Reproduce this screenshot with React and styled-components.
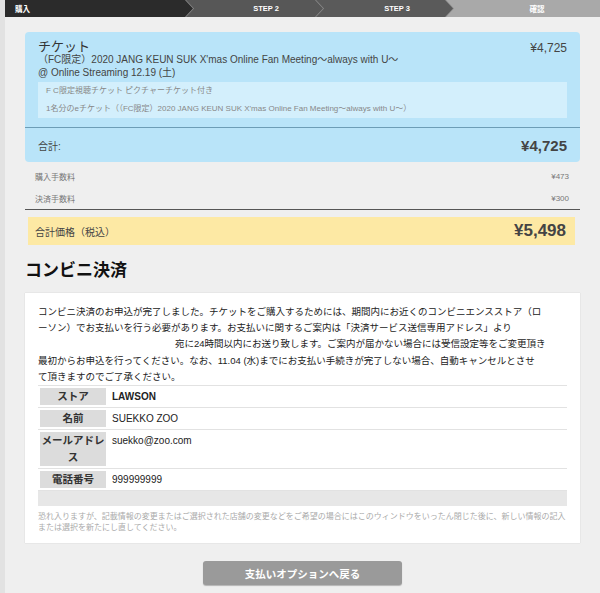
import React from 'react';
import styled, { createGlobalStyle } from 'styled-components';

const GlobalStyle = createGlobalStyle`
  body {
    margin: 0;
    background: #efefef;
    font-family: "Liberation Sans", "Noto Sans CJK JP", sans-serif;
    color: #333;
  }
`;

const Page = styled.div`
  min-height: 593px;
  border-left: 5px solid #e2e2e2;
`;

const StepBar = styled.div`
  display: flex;
  height: 17px;
  background: #8c8c8c;
  overflow: hidden;
`;

const Step = styled.div`
  flex: 0 0 ${props => props.$width}px;
  margin-left: ${props => (props.$first ? 0 : -7)}px;
  display: flex;
  align-items: center;
  justify-content: ${props => (props.$first ? 'flex-start' : 'center')};
  padding-left: ${props => props.$pad}px;
  box-sizing: border-box;
  background: ${props => props.$tone};
  color: #fff;
  font-size: 7.5px;
  font-weight: bold;
  clip-path: ${props =>
    props.$first
      ? 'polygon(0 0, calc(100% - 8px) 0, 100% 50%, calc(100% - 8px) 100%, 0 100%)'
      : props.$last
        ? 'polygon(0 0, 100% 0, 100% 100%, 0 100%, 8px 50%)'
        : 'polygon(0 0, calc(100% - 8px) 0, 100% 50%, calc(100% - 8px) 100%, 0 100%, 8px 50%)'};
`;

const Main = styled.div`
  padding: 15px 20px 0;
`;

const TicketCard = styled.div`
  background: #b9e4f9;
  border-radius: 4px;
  padding: 7px 13px 0;
`;

const TicketHead = styled.div`
  display: flex;
  justify-content: space-between;
  align-items: flex-start;
`;

const TicketTitle = styled.div`
  font-size: 13px;
  line-height: 15px;
  color: #333;
`;

const TicketSub = styled.div`
  font-size: 10px;
  line-height: 12.5px;
  color: #444;
`;

const Price = styled.div`
  font-size: ${props => (props.$big ? 15 : 12)}px;
  font-weight: ${props => (props.$big ? 'bold' : 'normal')};
  line-height: 15px;
  margin-top: ${props => (props.$big ? 0 : 2)}px;
  color: #444;
`;

const Included = styled.div`
  margin-top: 3px;
  background: #d3effc;
  padding: 0 8px;
`;

const IncludedLine = styled.div`
  font-size: 8px;
  line-height: 18px;
  color: #888;
`;

const TotalRow = styled.div`
  margin: 9px -13px 0;
  padding: 0 13px;
  height: 34px;
  border-top: 1px solid #6d9db6;
  display: flex;
  align-items: center;
  justify-content: space-between;
  font-size: 10px;
  color: #444;
`;

const FeeList = styled.div`
  padding: 3px 11px 0 10px;
  border-bottom: 1px solid #555;
`;

const FeeRow = styled.div`
  display: flex;
  justify-content: space-between;
  align-items: center;
  height: 22px;
  font-size: 8px;
  color: #777;
`;

const GrandTotal = styled.div`
  margin: 7px 5px 0 3px;
  height: 28px;
  padding: 0 9px 0 7px;
  background: #fde9a4;
  display: flex;
  align-items: center;
  justify-content: space-between;
  font-size: 10px;
  color: #444;
`;

const GrandAmount = styled.span`
  font-size: 17px;
  font-weight: bold;
`;

const SectionTitle = styled.h2`
  margin: 16px 0 12px;
  font-size: 17px;
  line-height: 20px;
  font-weight: bold;
  color: #111;
`;

const InfoCard = styled.div`
  background: #fff;
  padding: 11px 13px 10px;
  box-shadow: 0 0 1px rgba(0, 0, 0, 0.2);
`;

const NoticeLine = styled.div`
  font-size: 9.5px;
  line-height: 16.2px;
  color: #222;
  white-space: nowrap;
  padding-left: ${props => props.$indent || 0}px;
`;

const InfoRow = styled.div`
  display: flex;
  border-top: 1px solid #e2e2e2;
  padding: 2px 0;
`;

const InfoLabel = styled.div`
  flex: 0 0 66px;
  margin-left: 2px;
  background: #dcdcdc;
  text-align: center;
  font-size: 10.5px;
  font-weight: bold;
  line-height: 17px;
  color: #333;
`;

const InfoValue = styled.div`
  padding-left: 6px;
  font-size: 10px;
  line-height: 17px;
  color: #222;
  font-weight: ${props => (props.$strong ? 600 : 'normal')};
`;

const TableFoot = styled.div`
  height: 15px;
  border-top: 1px solid #e2e2e2;
  background: #e7e7e7;
`;

const Footnote = styled.p`
  margin: 6px 0 0;
  font-size: 8px;
  line-height: 10.5px;
  color: #aaa;
`;

const BackButton = styled.button`
  display: block;
  margin: 18px auto 0;
  width: 199px;
  height: 24px;
  border: none;
  border-radius: 3px;
  background: #9a9a9a;
  box-shadow: 0 1px 1px rgba(0, 0, 0, 0.25);
  color: #fff;
  font-family: inherit;
  font-size: 10.5px;
  font-weight: bold;
`;

const steps = [
  { label: '購入', width: 188, tone: '#2b2b2b', pad: 10 },
  { label: 'STEP 2', width: 137, tone: '#575757', pad: 23 },
  { label: 'STEP 3', width: 137, tone: '#5a5a5a', pad: 25 },
  { label: '確認', width: 154, tone: '#a9a9a9', pad: 28 }
];

const customer = [
  { label: 'ストア', value: 'LAWSON', strong: true },
  { label: '名前', value: 'SUEKKO ZOO' },
  { label: 'メールアドレス', value: 'suekko@zoo.com' },
  { label: '電話番号', value: '999999999' }
];

export default function App() {
  return (
    <Page>
      <GlobalStyle />
      <StepBar>
        {steps.map((s, i) => (
          <Step
            key={s.label}
            $width={s.width}
            $tone={s.tone}
            $pad={s.pad}
            $first={i === 0}
            $last={i === steps.length - 1}
          >
            {s.label}
          </Step>
        ))}
      </StepBar>

      <Main>
        <TicketCard>
          <TicketHead>
            <div>
              <TicketTitle>チケット</TicketTitle>
              <TicketSub>（FC限定）2020 JANG KEUN SUK X'mas Online Fan Meeting〜always with U〜</TicketSub>
              <TicketSub>@ Online Streaming 12.19 (土)</TicketSub>
            </div>
            <Price>¥4,725</Price>
          </TicketHead>
          <Included>
            <IncludedLine>F C限定視聴チケット ピクチャーチケット付き</IncludedLine>
            <IncludedLine>1名分のeチケット（（FC限定）2020 JANG KEUN SUK X'mas Online Fan Meeting〜always with U〜）</IncludedLine>
          </Included>
          <TotalRow>
            <span>合計:</span>
            <Price $big>¥4,725</Price>
          </TotalRow>
        </TicketCard>

        <FeeList>
          <FeeRow>
            <span>購入手数料</span>
            <span>¥473</span>
          </FeeRow>
          <FeeRow>
            <span>決済手数料</span>
            <span>¥300</span>
          </FeeRow>
        </FeeList>

        <GrandTotal>
          <span>合計価格（税込）</span>
          <GrandAmount>¥5,498</GrandAmount>
        </GrandTotal>

        <SectionTitle>コンビニ決済</SectionTitle>

        <InfoCard>
          <NoticeLine>コンビニ決済のお申込が完了しました。チケットをご購入するためには、期間内にお近くのコンビニエンスストア（ロ</NoticeLine>
          <NoticeLine>ーソン）でお支払いを行う必要があります。お支払いに関するご案内は「決済サービス送信専用アドレス」より</NoticeLine>
          <NoticeLine $indent={137}>宛に24時間以内にお送り致します。ご案内が届かない場合には受信設定等をご変更頂き</NoticeLine>
          <NoticeLine>最初からお申込を行ってください。なお、11.04 (水)までにお支払い手続きが完了しない場合、自動キャンセルとさせ</NoticeLine>
          <NoticeLine>て頂きますのでご了承ください。</NoticeLine>

          <div>
            {customer.map(c => (
              <InfoRow key={c.label}>
                <InfoLabel>{c.label}</InfoLabel>
                <InfoValue $strong={c.strong}>{c.value}</InfoValue>
              </InfoRow>
            ))}
            <TableFoot />
          </div>

          <Footnote>
            恐れ入りますが、記載情報の変更またはご選択された店舗の変更などをご希望の場合にはこのウィンドウをいったん閉じた後に、新しい情報の記入
            <br />
            または選択を新たにし直してください。
          </Footnote>
        </InfoCard>

        <BackButton type="button">支払いオプションへ戻る</BackButton>
      </Main>
    </Page>
  );
}
